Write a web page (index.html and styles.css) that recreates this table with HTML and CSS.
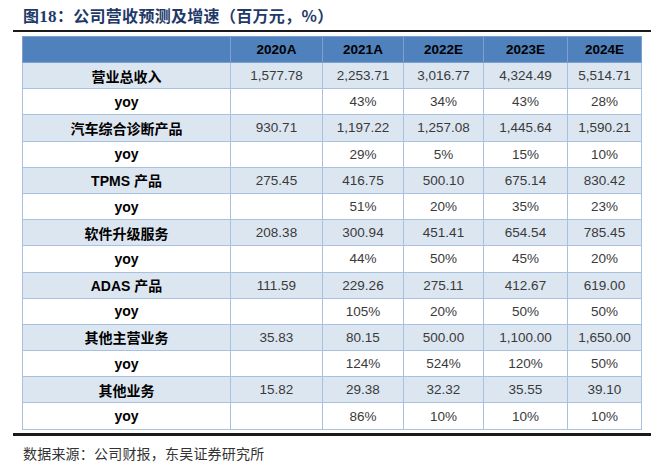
FILE: index.html
```html
<!DOCTYPE html>
<html lang="zh">
<head>
<meta charset="utf-8">
<link rel="stylesheet" href="styles.css">
</head>
<body>
<div class="page">
  <div class="title">图<span class="num">18</span>：公司营收预测及增速（百万元，%）</div>
  <div class="rule"></div>
  <table class="grid">
    <colgroup>
      <col class="c1"><col class="c2"><col class="c3"><col class="c4"><col class="c5"><col class="c6">
    </colgroup>
    <thead>
      <tr class="head"><th></th><th>2020A</th><th>2021A</th><th>2022E</th><th>2023E</th><th>2024E</th></tr>
    </thead>
    <tbody>
      <tr class="item"><th>营业总收入</th><td>1,577.78</td><td>2,253.71</td><td>3,016.77</td><td>4,324.49</td><td>5,514.71</td></tr>
      <tr class="yoy"><th>yoy</th><td></td><td>43%</td><td>34%</td><td>43%</td><td>28%</td></tr>
      <tr class="item"><th>汽车综合诊断产品</th><td>930.71</td><td>1,197.22</td><td>1,257.08</td><td>1,445.64</td><td>1,590.21</td></tr>
      <tr class="yoy"><th>yoy</th><td></td><td>29%</td><td>5%</td><td>15%</td><td>10%</td></tr>
      <tr class="item"><th>TPMS 产品</th><td>275.45</td><td>416.75</td><td>500.10</td><td>675.14</td><td>830.42</td></tr>
      <tr class="yoy"><th>yoy</th><td></td><td>51%</td><td>20%</td><td>35%</td><td>23%</td></tr>
      <tr class="item"><th>软件升级服务</th><td>208.38</td><td>300.94</td><td>451.41</td><td>654.54</td><td>785.45</td></tr>
      <tr class="yoy"><th>yoy</th><td></td><td>44%</td><td>50%</td><td>45%</td><td>20%</td></tr>
      <tr class="item"><th>ADAS 产品</th><td>111.59</td><td>229.26</td><td>275.11</td><td>412.67</td><td>619.00</td></tr>
      <tr class="yoy"><th>yoy</th><td></td><td>105%</td><td>20%</td><td>50%</td><td>50%</td></tr>
      <tr class="item"><th>其他主营业务</th><td>35.83</td><td>80.15</td><td>500.00</td><td>1,100.00</td><td>1,650.00</td></tr>
      <tr class="yoy"><th>yoy</th><td></td><td>124%</td><td>524%</td><td>120%</td><td>50%</td></tr>
      <tr class="item"><th>其他业务</th><td>15.82</td><td>29.38</td><td>32.32</td><td>35.55</td><td>39.10</td></tr>
      <tr class="yoy"><th>yoy</th><td></td><td>86%</td><td>10%</td><td>10%</td><td>10%</td></tr>
    </tbody>
  </table>
  <div class="rule bottom"></div>
  <div class="source">数据来源：公司财报，东吴证券研究所</div>
</div>
</body>
</html>
```

FILE: styles.css
```css
html, body {
  margin: 0;
  padding: 0;
  background: #ffffff;
}

.page {
  width: 651px;
  height: 469px;
  overflow: hidden;
}

.title {
  height: 30px;
  line-height: 30px;
  padding-left: 23px;
  font-family: "Noto Sans CJK SC", sans-serif;
  font-size: 16px;
  font-weight: bold;
  color: #1f3a68;
  letter-spacing: 0.3px;
}

.title .num {
  font-family: "Liberation Serif", serif;
  font-size: 17px;
  font-weight: bold;
}

.rule {
  margin-left: 13px;
  height: 0;
  border-top: 2px solid #1a1a1a;
}

.rule.bottom {
  margin-top: 3px;
  border-top-width: 3px;
}

.grid {
  margin-top: 4px;
  margin-left: 22px;
  width: 619px;
  table-layout: fixed;
  border-collapse: collapse;
  font-family: "Liberation Sans", "Noto Sans CJK SC", sans-serif;
  font-size: 13.5px;
}

.c1 { width: 208px; }
.c2 { width: 92px; }
.c3 { width: 81px; }
.c4 { width: 80px; }
.c5 { width: 84px; }
.c6 { width: 74px; }

.grid th,
.grid td {
  border: 1px solid #a9c1e0;
  padding: 0;
  text-align: center;
  vertical-align: middle;
}

.grid td {
  color: #3a3a3a;
  font-weight: normal;
}

.grid th {
  color: #000000;
  font-weight: bold;
  font-family: "Liberation Sans", "Noto Sans CJK SC", sans-serif;
  font-size: 14px;
}

.head {
  height: 26px;
  background: #4f81bd;
}

.head th {
  font-size: 13.5px;
  border-color: #7da0cf;
}

.item,
.yoy {
  height: 26.2px;
}

.item {
  background: #dce6f1;
}

.yoy {
  background: #ffffff;
}

.source {
  padding-left: 23px;
  margin-top: 7px;
  font-family: "Noto Sans CJK SC", sans-serif;
  font-size: 14px;
  line-height: 20px;
  color: #333333;
  letter-spacing: 0.2px;
}
```
